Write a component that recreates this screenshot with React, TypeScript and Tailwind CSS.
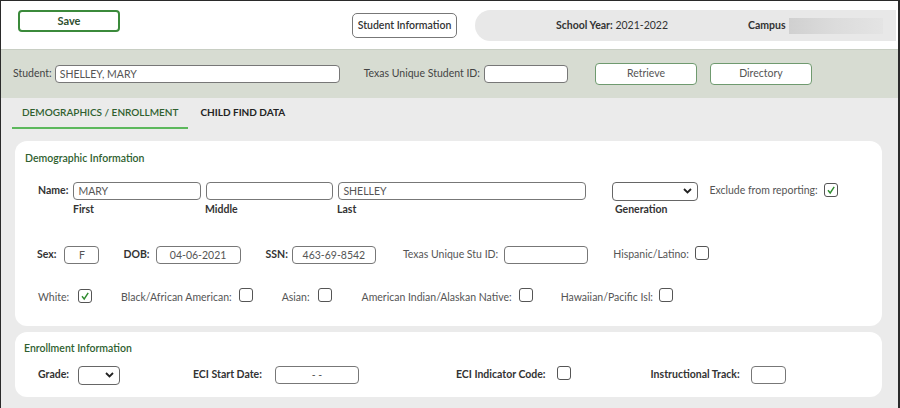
import React from "react";

function Check({ checked }: { checked?: boolean }) {
  return (
    <span className="inline-flex h-[14px] w-[14px] items-center justify-center rounded-[3px] border border-[#555] bg-white">
      {checked && (
        <svg width="10" height="10" viewBox="0 0 10 10">
          <path d="M2 5.2 L4.2 8 L8.2 1.8" fill="none" stroke="#2e8b2e" strokeWidth="1.4" />
        </svg>
      )}
    </span>
  );
}

function Box({ w, value, center }: { w: string; value?: string; center?: boolean }) {
  return (
    <div
      className={`${w} h-[18px] rounded-[4px] border border-[#777] bg-white px-[4px] text-[10.5px] leading-[16px] text-[#555] ${
        center ? "text-center" : ""
      }`}
    >
      {value}
    </div>
  );
}

function Select({ w }: { w: string }) {
  return (
    <div className={`${w} flex h-[19px] items-center justify-end rounded-[4px] border border-[#666] bg-white pr-[5px]`}>
      <svg width="9" height="6" viewBox="0 0 9 6">
        <path d="M1 1 L4.5 4.5 L8 1" fill="none" stroke="#222" strokeWidth="1.8" />
      </svg>
    </div>
  );
}

export default function App() {
  return (
    <div
      className="h-[408px] w-[900px] overflow-hidden border-l border-t border-r-2 border-[#2a2a2a] bg-[#ebebeb] text-[10.5px] text-[#555]"
      style={{ fontFamily: "Lato, 'Open Sans', sans-serif" }}
    >
      {/* top bar */}
      <div className="flex h-[48px] items-start bg-white">
        <button className="ml-[17px] mt-[9px] h-[22px] w-[102px] rounded-[4px] border-2 border-[#3b8a3b] text-[11px] font-bold text-[#2f4f2f]">
          Save
        </button>
        <button className="ml-[232px] mt-[12px] h-[25px] w-[105px] rounded-[5px] border border-[#777] text-[10.5px] font-semibold text-[#333]">
          Student Information
        </button>
        <div className="ml-[18px] mr-[2px] mt-[9px] flex h-[31px] flex-1 items-center rounded-l-full bg-[#e8e8e8]">
          <span className="ml-[81px] text-[10.5px] text-[#333]">
            <b>School Year:</b> 2021-2022
          </span>
          <b className="ml-[80px] text-[10.5px] text-[#333]">Campus</b>
          <div className="ml-[3px] h-[16px] w-[94px] bg-gradient-to-r from-[#d0d0d0] via-[#dcdcdc] to-[#e4e4e4]" />
        </div>
      </div>

      {/* student band */}
      <div className="flex h-[49px] items-center border-t border-[#c8cec3] bg-[#d7dcd2]">
        <span className="ml-[12px] text-[#444]">Student:</span>
        <div className="ml-[3px] h-[18px] w-[285px] rounded-[4px] border border-[#777] bg-white px-[4px] text-[10.5px] leading-[16px] text-[#555]">
          SHELLEY, MARY
        </div>
        <span className="ml-[24px] text-[#444]">Texas Unique Student ID:</span>
        <div className="ml-[4px] h-[18px] w-[84px] rounded-[4px] border border-[#777] bg-white" />
        <button className="ml-[27px] h-[22px] w-[102px] rounded-[4px] border border-[#6f9a6f] bg-white text-[10.5px] text-[#555]">
          Retrieve
        </button>
        <button className="ml-[13px] h-[22px] w-[102px] rounded-[4px] border border-[#6f9a6f] bg-white text-[10.5px] text-[#555]">
          Directory
        </button>
      </div>

      {/* tabs */}
      <div className="flex h-[31px] items-end pl-[11px]">
        <div className="border-b-2 border-[#5cb85c] px-[10px] pb-[7px] text-[10px] font-semibold text-[#2f5f2f]">
          DEMOGRAPHICS / ENROLLMENT
        </div>
        <div className="ml-[2px] px-[10px] pb-[9px] text-[10px] font-bold text-[#222]">CHILD FIND DATA</div>
      </div>

      {/* demographic card */}
      <div className="ml-[14px] mt-[12px] h-[185px] w-[867px] rounded-[12px] bg-white pl-[10px] pt-[10px]">
        <div className="text-[10.5px] font-semibold text-[#2f5f2f]">Demographic Information</div>

        <div className="mt-[15px] flex items-center">
          <b className="ml-[13px] text-[#333]">Name:</b>
          <div className="ml-[5px]">
            <Box w="w-[128px]" value="MARY" />
          </div>
          <div className="ml-[5px]">
            <Box w="w-[127px]" />
          </div>
          <div className="ml-[5px]">
            <Box w="w-[248px]" value="SHELLEY" />
          </div>
          <div className="ml-[26px]">
            <Select w="w-[86px]" />
          </div>
          <span className="ml-[11px]">Exclude from reporting:</span>
          <span className="ml-[6px]">
            <Check checked />
          </span>
        </div>
        <div className="mt-[1px] flex font-bold text-[#333]">
          <span className="ml-[48px] w-[132px]">First</span>
          <span className="w-[132px]">Middle</span>
          <span className="w-[278px]">Last</span>
          <span>Generation</span>
        </div>

        <div className="mt-[28px] flex items-center">
          <b className="ml-[12px] text-[#333]">Sex:</b>
          <div className="ml-[8px]">
            <Box w="w-[35px]" value="F" center />
          </div>
          <b className="ml-[24px] text-[#333]">DOB:</b>
          <div className="ml-[6px]">
            <Box w="w-[85px]" value="04-06-2021" center />
          </div>
          <b className="ml-[25px] text-[#333]">SSN:</b>
          <div className="ml-[4px]">
            <Box w="w-[84px]" value="463-69-8542" center />
          </div>
          <span className="ml-[27px]">Texas Unique Stu ID:</span>
          <div className="ml-[6px]">
            <Box w="w-[84px]" />
          </div>
          <span className="ml-[25px]">Hispanic/Latino:</span>
          <span className="ml-[6px]">
            <Check />
          </span>
        </div>

        <div className="mt-[24px] flex items-center">
          <span className="ml-[13px]">White:</span>
          <span className="ml-[9px]">
            <Check checked />
          </span>
          <span className="ml-[29px]">Black/African American:</span>
          <span className="ml-[7px]">
            <Check />
          </span>
          <span className="ml-[29px]">Asian:</span>
          <span className="ml-[8px]">
            <Check />
          </span>
          <span className="ml-[30px]">American Indian/Alaskan Native:</span>
          <span className="ml-[7px]">
            <Check />
          </span>
          <span className="ml-[28px]">Hawaiian/Pacific Isl:</span>
          <span className="ml-[6px]">
            <Check />
          </span>
        </div>
      </div>

      {/* enrollment card */}
      <div className="ml-[14px] mt-[6px] h-[65px] w-[867px] rounded-[12px] bg-white pl-[9px] pt-[9px]">
        <div className="text-[10.5px] font-semibold text-[#2f5f2f]">Enrollment Information</div>
        <div className="mt-[9px] flex items-center">
          <b className="ml-[14px] text-[#333]">Grade:</b>
          <div className="ml-[9px]">
            <Select w="w-[42px]" />
          </div>
          <b className="ml-[73px] text-[#333]">ECI Start Date:</b>
          <div className="ml-[13px]">
            <Box w="w-[84px]" value="- -" center />
          </div>
          <b className="ml-[97px] text-[#333]">ECI Indicator Code:</b>
          <span className="ml-[11px]">
            <Check />
          </span>
          <b className="ml-[80px] text-[#333]">Instructional Track:</b>
          <div className="ml-[11px]">
            <Box w="w-[35px]" />
          </div>
        </div>
      </div>
    </div>
  );
}
